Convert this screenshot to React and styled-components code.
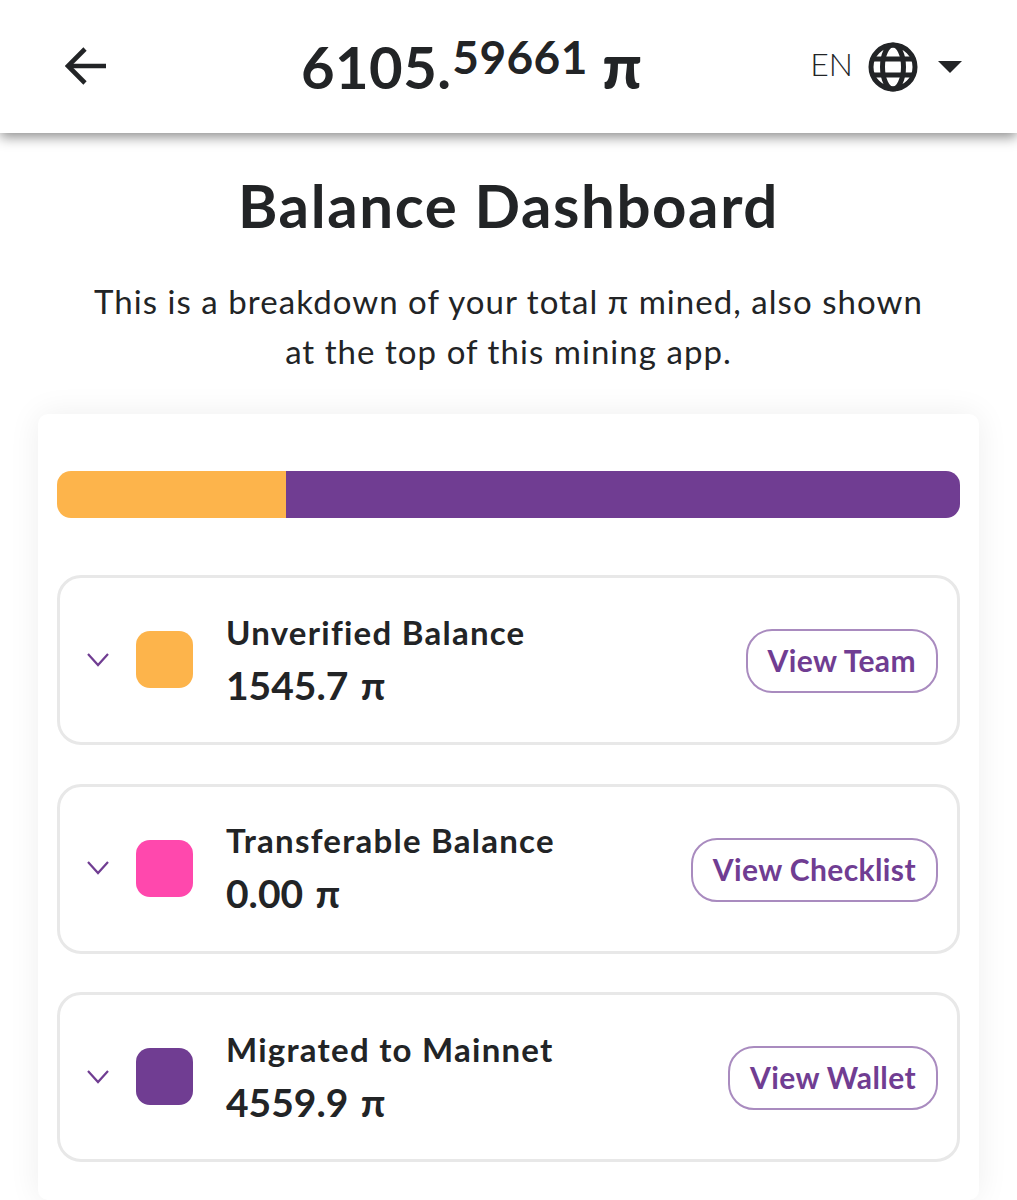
import React from 'react';
import styled, { createGlobalStyle } from 'styled-components';

const ORANGE = '#fdb44b';
const PINK = '#ff48ad';
const PURPLE = '#703d92';
const INK = '#222426';

const rows = [
  { label: 'Unverified Balance', value: '1545.7 π', color: ORANGE, action: 'View Team' },
  { label: 'Transferable Balance', value: '0.00 π', color: PINK, action: 'View Checklist' },
  { label: 'Migrated to Mainnet', value: '4559.9 π', color: PURPLE, action: 'View Wallet' },
];

const App = () => (
  <>
    <GlobalStyle />
    <Header>
      <BackButton aria-label="Back">
        <svg width="42" height="38" viewBox="0 0 42 38" fill="none" stroke={INK} strokeWidth="4.6">
          <path d="M41 19H3" />
          <path d="M20 2 3 19l17 17" />
        </svg>
      </BackButton>
      <Total>
        6105.<Decimals>59661</Decimals> <Pi>π</Pi>
      </Total>
      <Language>
        <LangCode>EN</LangCode>
        <svg width="50" height="50" viewBox="0 0 50 50" fill="none" stroke={INK} strokeWidth="5">
          <circle cx="25" cy="25" r="22" />
          <ellipse cx="25" cy="25" rx="10.5" ry="22" />
          <path d="M4 17h42M4 33h42" />
        </svg>
        <Caret />
      </Language>
    </Header>
    <Main>
      <Title>Balance Dashboard</Title>
      <Intro>
        This is a breakdown of your total π mined, also shown
        <br />
        at the top of this mining app.
      </Intro>
      <Card>
        <Bar>
          <BarPart $color={ORANGE} style={{ width: `${(1545.7 / 6105.6) * 100}%` }} />
          <BarPart $color={PURPLE} style={{ flex: 1 }} />
        </Bar>
        <Rows>
          {rows.map(row => (
            <Row key={row.label}>
              <svg width="24" height="16" viewBox="0 0 24 16" fill="none" stroke={PURPLE} strokeWidth="2.2">
                <path d="M2 2l10 11L22 2" />
              </svg>
              <Swatch $color={row.color} />
              <Info>
                <Label>{row.label}</Label>
                <Value>{row.value}</Value>
              </Info>
              <Action>{row.action}</Action>
            </Row>
          ))}
        </Rows>
      </Card>
    </Main>
  </>
);

const GlobalStyle = createGlobalStyle`
  html, body {
    margin: 0;
    background: #fff;
    color: ${INK};
    font-family: "Lato", "Noto Sans", sans-serif;
  }
  body {
    height: 1200px;
    overflow: hidden;
  }
`;

const Header = styled.header`
  position: relative;
  z-index: 1;
  height: 133px;
  box-sizing: border-box;
  padding: 0 55px 0 65px;
  display: flex;
  align-items: center;
  justify-content: space-between;
  background: #fff;
  box-shadow: 0 4px 12px rgba(0, 0, 0, 0.45);
`;

const BackButton = styled.div`
  display: flex;
  margin-bottom: 2px;
`;

const Total = styled.div`
  margin: 0 0 3px 26px;
  font-size: 58px;
  font-weight: 700;
  line-height: 1;
  letter-spacing: 0.4px;
  white-space: nowrap;
`;

const Decimals = styled.sup`
  font-size: 46px;
  font-weight: 700;
  line-height: 0;
  vertical-align: 15px;
  margin-left: 1px;
`;

const Pi = styled.span`
  font-size: 62px;
  font-weight: 900;
`;

const Language = styled.div`
  display: flex;
  align-items: center;
`;

const LangCode = styled.span`
  font-size: 32px;
  font-weight: 300;
  margin: -6px 15px 0 0;
`;

const Caret = styled.div`
  width: 0;
  height: 0;
  margin-left: 20px;
  border-left: 12px solid transparent;
  border-right: 12px solid transparent;
  border-top: 12px solid ${INK};
`;

const Main = styled.main`
  padding: 0 38px;
`;

const Title = styled.h1`
  margin: 0;
  padding-top: 40px;
  font-size: 60px;
  line-height: 64px;
  font-weight: 700;
  letter-spacing: 1.6px;
  text-align: center;
`;

const Intro = styled.p`
  margin: 39px 0 38px;
  font-size: 33px;
  line-height: 50px;
  letter-spacing: 1.05px;
  text-align: center;
`;

const Card = styled.section`
  padding: 57px 19px 38px;
  background: #fff;
  border-radius: 10px;
  box-shadow: 0 0 32px rgba(0, 0, 0, 0.07);
`;

const Bar = styled.div`
  display: flex;
  height: 47px;
  border-radius: 14px;
  overflow: hidden;
`;

const BarPart = styled.div`
  background: ${p => p.$color};
`;

const Rows = styled.div`
  display: flex;
  flex-direction: column;
  gap: 38.5px;
  margin-top: 57px;
`;

const Row = styled.div`
  height: 170px;
  box-sizing: border-box;
  padding: 0 19px 0 26px;
  display: flex;
  align-items: center;
  background: #fff;
  border: 3px solid #e8e8e8;
  border-radius: 24px;

  svg {
    flex: none;
    margin-top: -1px;
  }
`;

const Swatch = styled.div`
  flex: none;
  width: 57px;
  height: 57px;
  margin: -1px 0 0 26px;
  border-radius: 14px;
  background: ${p => p.$color};
`;

const Info = styled.div`
  flex: 1;
  margin-left: 33px;
`;

const Label = styled.div`
  font-size: 33px;
  line-height: 44px;
  font-weight: 700;
  letter-spacing: 1.25px;
`;

const Value = styled.div`
  margin-top: 5px;
  font-size: 39px;
  line-height: 52px;
  font-weight: 700;
  word-spacing: 3px;
`;

const Action = styled.div`
  padding: 0 20px 2px;
  height: 64px;
  box-sizing: border-box;
  display: flex;
  align-items: center;
  margin-top: 2px;
  font-size: 30px;
  font-weight: 700;
  letter-spacing: 0.4px;
  color: ${PURPLE};
  border: 2px solid #a98bbf;
  border-radius: 26px;
`;

export default App;
